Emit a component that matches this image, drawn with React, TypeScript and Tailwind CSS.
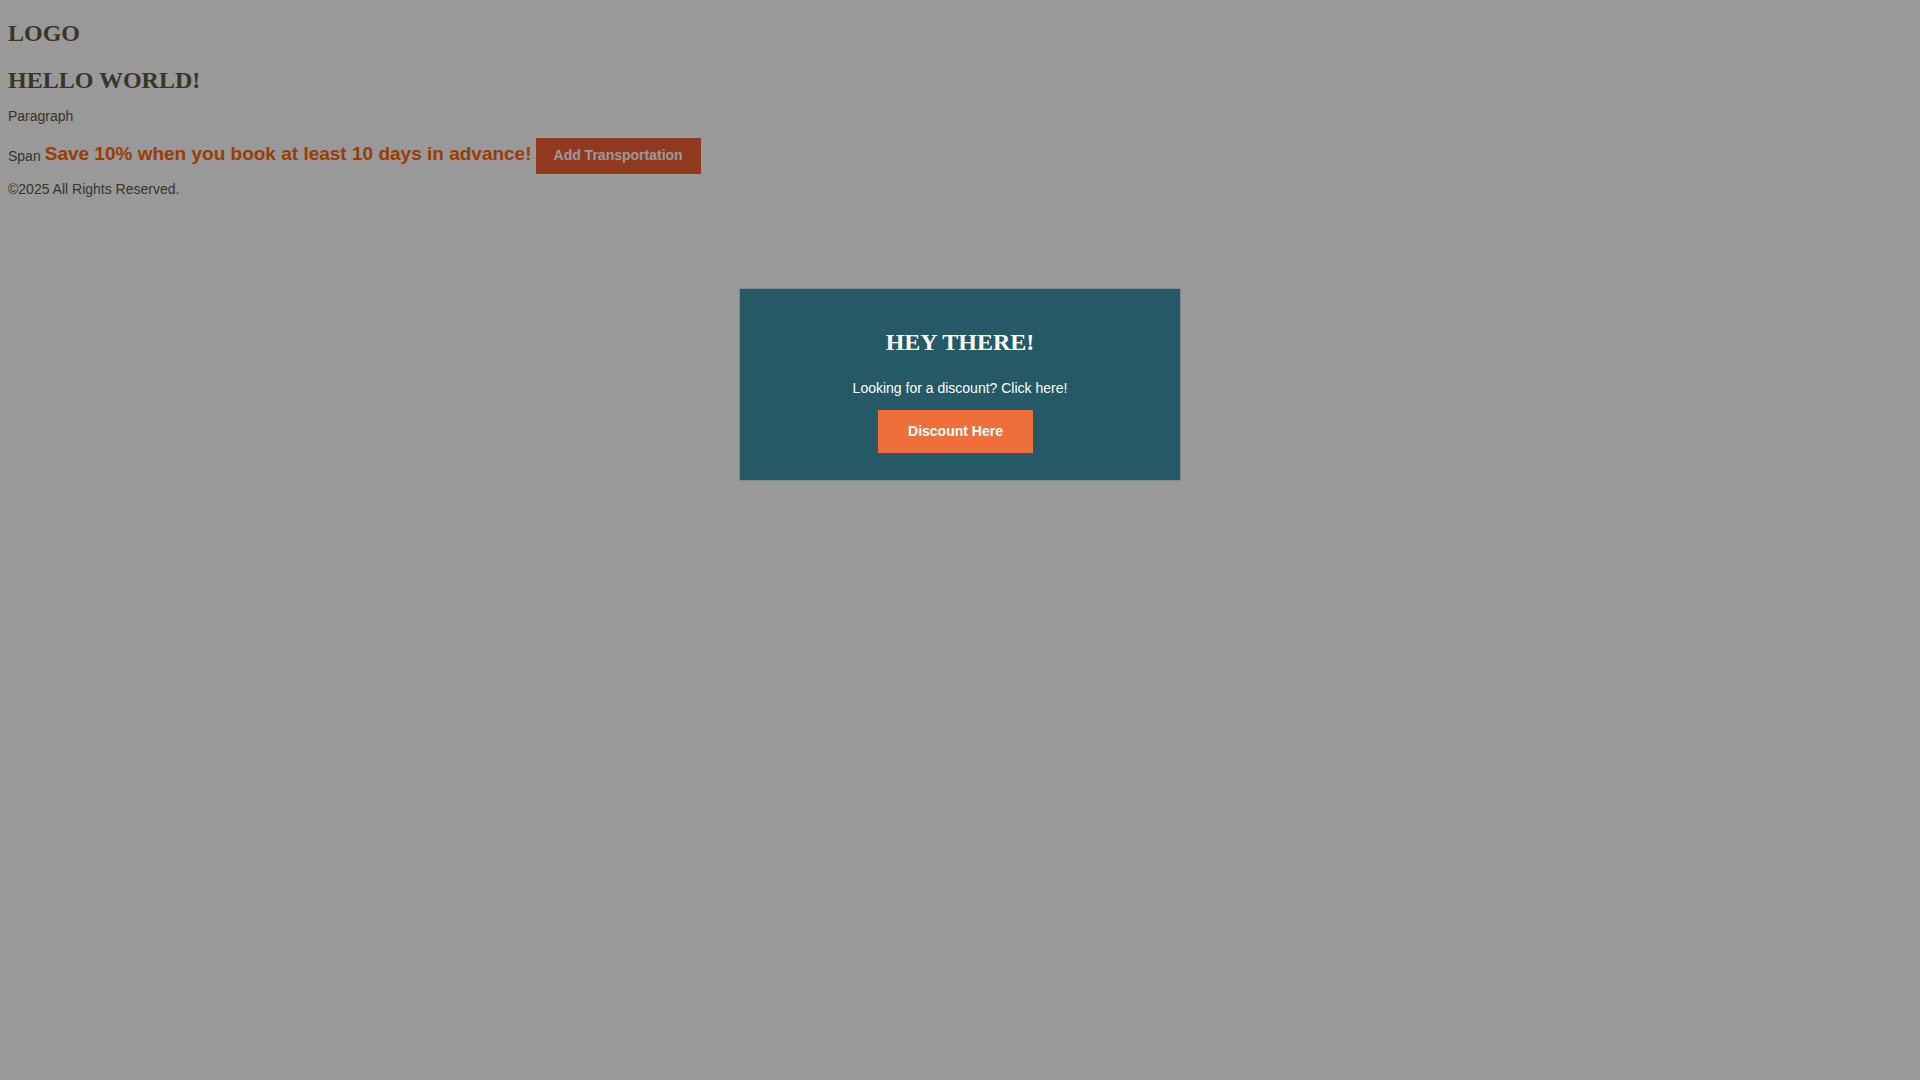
export default function App() {
  return (
    <div className="min-h-screen bg-white font-['Liberation_Sans',Arial,sans-serif] text-sm leading-4 text-[#605943]">
      <div className="flex flex-col px-2">
        <header className="pt-[19px]">
          <h1 className="font-['Liberation_Serif',serif] text-2xl leading-7 font-bold">LOGO</h1>
        </header>
        <main className="pt-[19px]">
          <h2 className="font-['Liberation_Serif',serif] text-2xl leading-7 font-bold">HELLO WORLD!</h2>
          <p className="mt-[14px]">Paragraph</p>
          <div className="mt-[14px] flex items-center gap-1">
            <span>Span</span>
            <strong className="pb-1 text-[19px] leading-6 text-[#ff6600]">
              Save 10% when you book at least 10 days in advance!
            </strong>
            <button type="button" className="h-9 bg-[#f06033] px-[18px] pb-0.5 font-bold text-white">
              Add Transportation
            </button>
          </div>
        </main>
        <footer className="mt-[7px]">©2025 All Rights Reserved.</footer>
      </div>

      <div className="fixed inset-0 overflow-auto bg-black/40 pt-72">
        <div
          role="dialog"
          aria-labelledby="discount-title"
          className="mx-auto flex w-[442px] max-w-full flex-col items-center border border-[#888888] bg-[#245965] px-5 pt-[39px] pb-[27px] text-white"
        >
          <h2 id="discount-title" className="font-['Liberation_Serif',serif] text-2xl leading-7 font-bold">
            HEY THERE!
          </h2>
          <p className="mt-6">Looking for a discount? Click here!</p>
          <button type="button" className="mt-[14px] mr-[9px] bg-[#ee6f3a] px-[30px] pt-[13px] pb-[14px] leading-4 font-bold">
            Discount Here
          </button>
        </div>
      </div>
    </div>
  );
}
